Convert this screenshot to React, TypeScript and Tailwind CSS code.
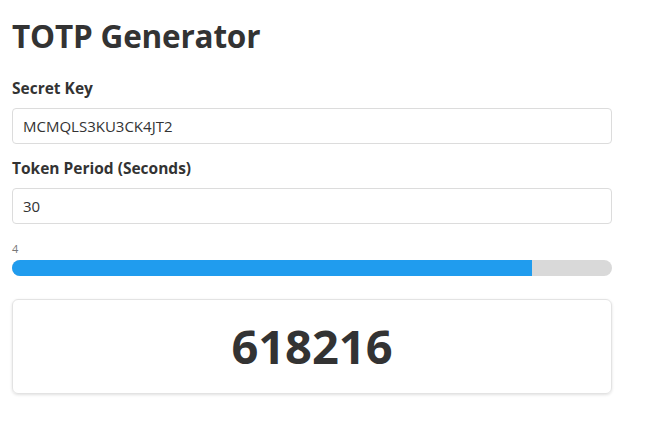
export default function App() {
    const period = 30
    const remaining = 4
    const pct = ((period - remaining) / period) * 100

    return (
        <div className="min-h-screen bg-white px-3 pt-[14px] text-[#333]" style={{ fontFamily: '"Open Sans", "Noto Sans", sans-serif' }}>
            <div className="w-[600px]">
                {/* 제목 */}
                <h1 className="text-[31.5px] font-bold leading-[44px] tracking-[-0.2px]">TOTP Generator</h1>

                {/* 시크릿 키 */}
                <label className="mt-[19px] block text-[15.5px] font-bold leading-[22px]">Secret Key</label>
                <input
                    readOnly
                    value="MCMQLS3KU3CK4JT2"
                    className="mt-[9px] block h-[36px] w-full rounded-[4px] border border-[#dcdcdc] px-[10px] text-[15px] text-[#333] outline-none"
                />

                {/* 토큰 주기 */}
                <label className="mt-[13px] block text-[15.5px] font-bold leading-[22px]">Token Period (Seconds)</label>
                <input
                    readOnly
                    value="30"
                    className="mt-[9px] block h-[36px] w-full rounded-[4px] border border-[#dcdcdc] px-[10px] text-[15px] text-[#333] outline-none"
                />

                {/* 남은 시간 */}
                <div className="mt-[18px] text-[11px] leading-[14px] text-[#777]">{remaining}</div>
                <div className="mt-[4px] h-[16px] w-full overflow-hidden rounded-full bg-[#d9d9d9]">
                    <div className="h-full bg-[#209cee]" style={{ width: `${pct}%` }} />
                </div>

                {/* 토큰 */}
                <div className="mt-[23px] flex h-[95px] items-center justify-center rounded-[6px] border border-[#e3e3e3] shadow-[0_1px_3px_rgba(0,0,0,0.12)]">
                    <span className="text-[47px] font-bold leading-none">618216</span>
                </div>
            </div>
        </div>
    )
}
